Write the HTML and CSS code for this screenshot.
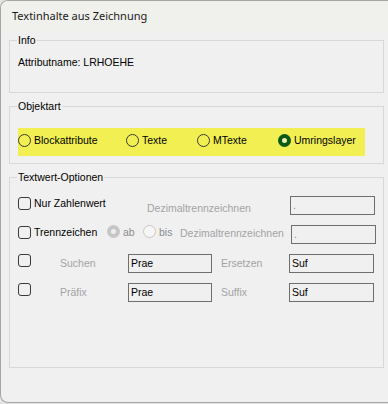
FILE: index.html
```html
<!DOCTYPE html>
<html lang="de">
<head>
<meta charset="utf-8">
<title>Textinhalte aus Zeichnung</title>
<link rel="stylesheet" href="styles.css">
</head>
<body>
<div class="window">
  <div class="titlebar">Textinhalte aus Zeichnung</div>
  <div class="content">
    <fieldset class="group">
      <legend>Info</legend>
      <div class="info-body">Attributname: LRHOEHE</div>
    </fieldset>

    <fieldset class="group">
      <legend>Objektart</legend>
      <div class="obj-body">
        <div class="band">
          <label class="radio w-block"><span class="rb"></span>Blockattribute</label>
          <label class="radio w-texte"><span class="rb"></span>Texte</label>
          <label class="radio w-mtexte"><span class="rb"></span>MTexte</label>
          <label class="radio"><span class="rb checked"></span>Umringslayer</label>
        </div>
      </div>
    </fieldset>

    <fieldset class="group">
      <legend>Textwert-Optionen</legend>
      <div class="opt-body">
        <div class="row">
          <label class="check w-nur"><span class="cb"></span>Nur Zahlenwert</label>
          <span class="dis w-dez1">Dezimaltrennzeichnen</span>
          <span class="tb w85 dim">.</span>
        </div>
        <div class="row">
          <label class="check w-trenn"><span class="cb"></span>Trennzeichen</label>
          <label class="radio-sm w-ab"><span class="rb dis-checked"></span><span class="sub">ab</span></label>
          <label class="radio-sm w-bis"><span class="rb dis-empty"></span><span class="sub">bis</span></label>
          <span class="dis w-dez2">Dezimaltrennzeichnen</span>
          <span class="tb w85 dim">.</span>
        </div>
        <div class="row">
          <label class="check w-cb"><span class="cb flush"></span></label>
          <span class="dis w-lbl">Suchen</span>
          <span class="tb w84">Prae</span>
          <span class="dis w-lbl gap-left">Ersetzen</span>
          <span class="tb w85">Suf</span>
        </div>
        <div class="row">
          <label class="check w-cb"><span class="cb flush"></span></label>
          <span class="dis w-lbl">Präfix</span>
          <span class="tb w84">Prae</span>
          <span class="dis w-lbl gap-left">Suffix</span>
          <span class="tb w85">Suf</span>
        </div>
      </div>
    </fieldset>
  </div>
</div>
</body>
</html>
```

FILE: styles.css
```css
* { box-sizing: border-box; }

html, body {
  margin: 0;
  padding: 0;
}

body {
  width: 388px;
  height: 404px;
  overflow: hidden;
  background: #e4e4e4;
  font-family: "Liberation Sans", Arial, sans-serif;
  font-size: 10.5px;
  line-height: 13px;
  color: #000;
}

.window {
  width: 400px;
  height: 403px;
  background: #f0f0f0;
  border: 1px solid #a6a6a6;
  border-right: none;
  border-radius: 8px 0 0 8px;
  overflow: hidden;
}

.titlebar {
  height: 30px;
  background: #f0f0ec;
  padding: 7px 0 0 11px;
  font-family: "Noto Sans", "Open Sans", sans-serif;
  font-size: 11px;
  line-height: 16px;
  color: #1a1a1a;
}

.content {
  padding: 3px 0 0 8px;
  display: flex;
  flex-direction: column;
  gap: 7px;
}

.group {
  width: 375px;
  margin: 0;
  padding: 0;
  border: 1px solid #d8d8d8;
  min-width: 0;
}

.group legend {
  margin-left: 7px;
  padding: 0 1px;
  font-size: 10.5px;
  line-height: 13px;
}

.info-body {
  height: 45px;
  padding: 9px 0 0 8px;
}

.obj-body {
  height: 50px;
  padding: 15px 0 0 8px;
}

.band {
  width: 347px;
  height: 28px;
  padding-bottom: 3px;
  background: #f1ef52;
  display: flex;
  align-items: center;
}

.radio {
  display: flex;
  align-items: center;
  gap: 3px;
}

.w-block { width: 108px; }
.w-texte { width: 71px; }
.w-mtexte { width: 81px; }

.rb {
  width: 13px;
  height: 13px;
  border-radius: 50%;
  border: 1px solid #3c3c28;
  flex: none;
}

.rb.checked {
  border: 4px solid #0b5a16;
  background: #eef0b0;
}

.rb.dis-checked {
  border: 4px solid #c6c6c6;
  background: #efefef;
}

.rb.dis-empty {
  border: 1px solid #c8c8c8;
  background: #f6f6f6;
}

.opt-body {
  height: 183px;
  padding: 12px 0 0 8px;
  display: flex;
  flex-direction: column;
  gap: 10px;
}

.row {
  display: flex;
  align-items: flex-start;
  height: 19px;
}

.check {
  display: flex;
  align-items: flex-start;
  gap: 3px;
  padding-top: 0.5px;
}

.cb {
  width: 13px;
  height: 13px;
  border: 1px solid #3a3a3a;
  border-radius: 3px;
  margin-top: 0.5px;
  flex: none;
}

.cb.flush { margin-top: 0; }

.w-nur { width: 129px; }
.w-trenn { width: 89px; }
.w-cb { width: 42px; padding-top: 0; }

.radio-sm {
  display: flex;
  align-items: center;
  gap: 3px;
  height: 13px;
  margin-top: 0;
}

.w-ab { width: 36px; }
.w-bis { width: 37px; }

.sub { color: #8c8c8c; padding-top: 2px; }

.dis { color: #a3a3a3; }

.w-dez1 { width: 143px; padding-top: 6px; }
.w-dez2 { width: 111px; padding-top: 2px; }
.w-lbl { width: 68px; padding-top: 3px; }
.gap-left { margin-left: 9px; }

.tb {
  height: 19px;
  border: 1px solid #6e6e6e;
  background: #f0f0f0;
  padding: 2px 0 0 2px;
  color: #000;
  white-space: nowrap;
  overflow: hidden;
}

.tb.dim { color: #8c8c8c; }

.w84 { width: 84px; }
.w85 { width: 85px; }
```
